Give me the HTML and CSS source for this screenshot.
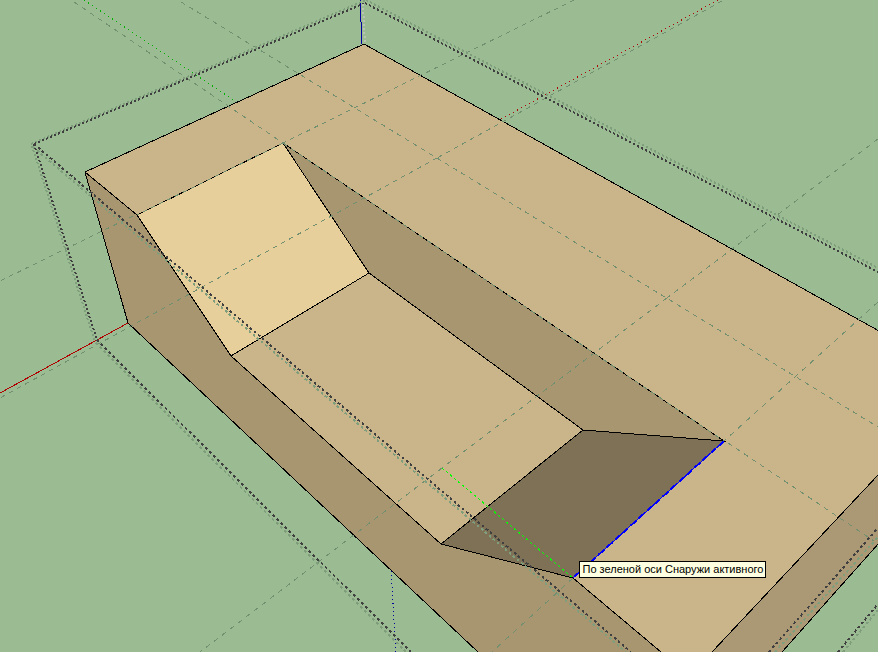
FILE: index.html
```html
<!DOCTYPE html>
<html lang="ru">
<head>
<meta charset="UTF-8">
<title>3D модель</title>
<link rel="stylesheet" href="styles.css">
</head>
<body>

<main class="viewport">
<svg class="scene" viewBox="0 0 878 652" preserveAspectRatio="xMidYMid slice" aria-hidden="true">

    <!-- faces -->
    <polygon class="face-side" points="85,172 137,215 231,356 441,544 573,578 661,652 478,652 128,323"/>
    <polygon class="face-right" points="712,652 879,474 879,543 782,652"/>
    <polygon class="face-top" points="364,44 879,331 879,474 712,652 661,652 573,578 724,441 283,143 137,215 85,172"/>
    <polygon class="face-light" points="137,215 283,143 369,273 231,356"/>
    <polygon class="face-side" points="283,143 724,441 583,430 369,273"/>
    <polygon class="face-top" points="369,273 583,430 441,544 231,356"/>
    <polygon class="face-dark" points="583,430 724,441 573,578 441,544"/>

    <!-- axes behind the model -->
    <line class="axis-green" x1="84" y1="0" x2="235" y2="101" pathLength="151"/>
    <line class="axis-red dots" x1="501" y1="119" x2="718" y2="0" pathLength="217"/>
    <line class="axis-red" x1="0" y1="393" x2="128" y2="323"/>
    <line class="axis-blue" x1="360" y1="0" x2="362" y2="44"/>
    <line class="axis-blue dots" x1="391" y1="571" x2="396" y2="652" pathLength="81"/>

    <!-- edges -->
    <polyline class="edge" points="879,331 364,44 85,172 128,323 478,652"/>
    <polyline class="edge" points="85,172 137,215 231,356 441,544 573,578 661,652"/>
    <polyline class="edge" points="137,215 283,143 724,441 583,430 369,273 283,143"/>
    <path class="edge" d="M231,356 L369,273 M583,430 L441,544 M712,652 L879,474 M782,652 L879,543"/>

    <!-- selected edge -->
    <line class="picked" x1="724" y1="441" x2="573" y2="578"/>
    <line class="picked-dash" x1="724" y1="441" x2="573" y2="578" pathLength="151"/>

    <!-- guide lines -->
    <line class="guide" x1="74" y1="2" x2="283" y2="143" pathLength="209"/>
    <line class="guide" x1="283" y1="143" x2="724" y2="441" pathLength="441"/>
    <line class="guide" x1="728" y1="443" x2="874" y2="541" pathLength="146"/>
    <line class="guide" x1="181" y1="2" x2="878" y2="427" pathLength="697"/>
    <line class="guide" x1="574" y1="0" x2="283" y2="143" pathLength="291"/>
    <line class="guide" x1="283" y1="143" x2="137" y2="215" pathLength="146"/>
    <line class="guide" x1="133" y1="216" x2="0" y2="281" pathLength="133"/>
    <line class="guide" x1="722" y1="1" x2="437" y2="158" pathLength="285"/>
    <line class="guide" x1="437" y1="158" x2="0" y2="398" pathLength="437"/>
    <line class="guide" x1="878" y1="139" x2="667" y2="298" pathLength="211"/>
    <line class="guide" x1="667" y1="298" x2="442" y2="468" pathLength="225"/>
    <line class="guide" x1="442" y1="468" x2="200" y2="652" pathLength="242"/>
    <line class="guide" x1="878" y1="302" x2="724" y2="441" pathLength="154"/>
    <line class="guide" x1="573" y1="578" x2="492" y2="652" pathLength="81"/>

    <!-- bounding box of the group, shadow copy first -->
    <g class="bounds-back">
        <line x1="31" y1="144" x2="366" y2="0" pathLength="335"/>
        <line x1="366" y1="0" x2="878" y2="268" pathLength="512"/>
        <line x1="32" y1="146" x2="95" y2="342" pathLength="196"/>
        <line x1="96" y1="343" x2="406" y2="652" pathLength="310"/>
        <line x1="33" y1="147" x2="626" y2="652" pathLength="593"/>
        <line x1="775" y1="652" x2="878" y2="537" pathLength="115"/>
        <line x1="843" y1="652" x2="878" y2="610" pathLength="42"/>
    </g>
    <g class="bounds">
        <line x1="34" y1="144" x2="365" y2="3" pathLength="331"/>
        <line x1="365" y1="3" x2="878" y2="272" pathLength="513"/>
        <line x1="34" y1="144" x2="97" y2="340" pathLength="196"/>
        <line x1="97" y1="340" x2="411" y2="652" pathLength="314"/>
        <line x1="34" y1="144" x2="631" y2="652" pathLength="597"/>
        <line x1="769" y1="652" x2="878" y2="528" pathLength="124"/>
        <line x1="838" y1="652" x2="878" y2="604" pathLength="48"/>
    </g>
    <line class="bounds-light" x1="363" y1="4" x2="365" y2="44" pathLength="40"/>

    <!-- inference line -->
    <line class="inference" x1="442" y1="468" x2="573" y2="578" pathLength="131"/>
</svg>

<div class="tooltip" role="tooltip">По зеленой оси Снаружи активного</div>
</main>

</body>
</html>
```
FILE: styles.css
```css
body {
    margin: 0;
    background: #9bbc92;
    font-family: "Liberation Sans", Arial, sans-serif;
}

.viewport {
    position: relative;
    height: 100vh;
    overflow: hidden;
}

.scene {
    display: block;
    width: 100%;
    height: 100%;
    fill: none;
    shape-rendering: crispEdges;
}

/* faces */
.face-top { fill: #cab489; }
.face-light { fill: #e7cf9c; }
.face-side { fill: #a89671; }
.face-right { fill: #ab9975; }
.face-dark { fill: #7f7156; }

.edge { stroke: #000; }

.picked { stroke: #0000ff; }

.picked-dash {
    stroke: #0000ff;
    stroke-width: 2;
    stroke-dasharray: 5 3;
}

.guide {
    stroke: #729070;
    stroke-dasharray: 4 4;
}

/* axes */
.axis-green { stroke: #00b000; stroke-dasharray: 1 3; }
.axis-red { stroke: #b00000; }
.axis-blue { stroke: #0000a0; }
.dots { stroke-dasharray: 1 3; }

/* bounding box */
.bounds,
.bounds-back,
.bounds-light {
    stroke-width: 2;
    stroke-dasharray: 2 2;
}

.bounds { stroke: #404040; }
.bounds-back { stroke: #7f9f7c; }
.bounds-light { stroke: #b9c4b4; }

.inference {
    stroke: #00ff00;
    stroke-dasharray: 2 2;
}

.tooltip {
    position: absolute;
    left: 66%;
    top: 86%;
    padding: 0 2px;
    border: 1px solid #000;
    background: #ffffe1;
    color: #000;
    font-size: 11px;
    line-height: 15px;
    white-space: nowrap;
}
```
